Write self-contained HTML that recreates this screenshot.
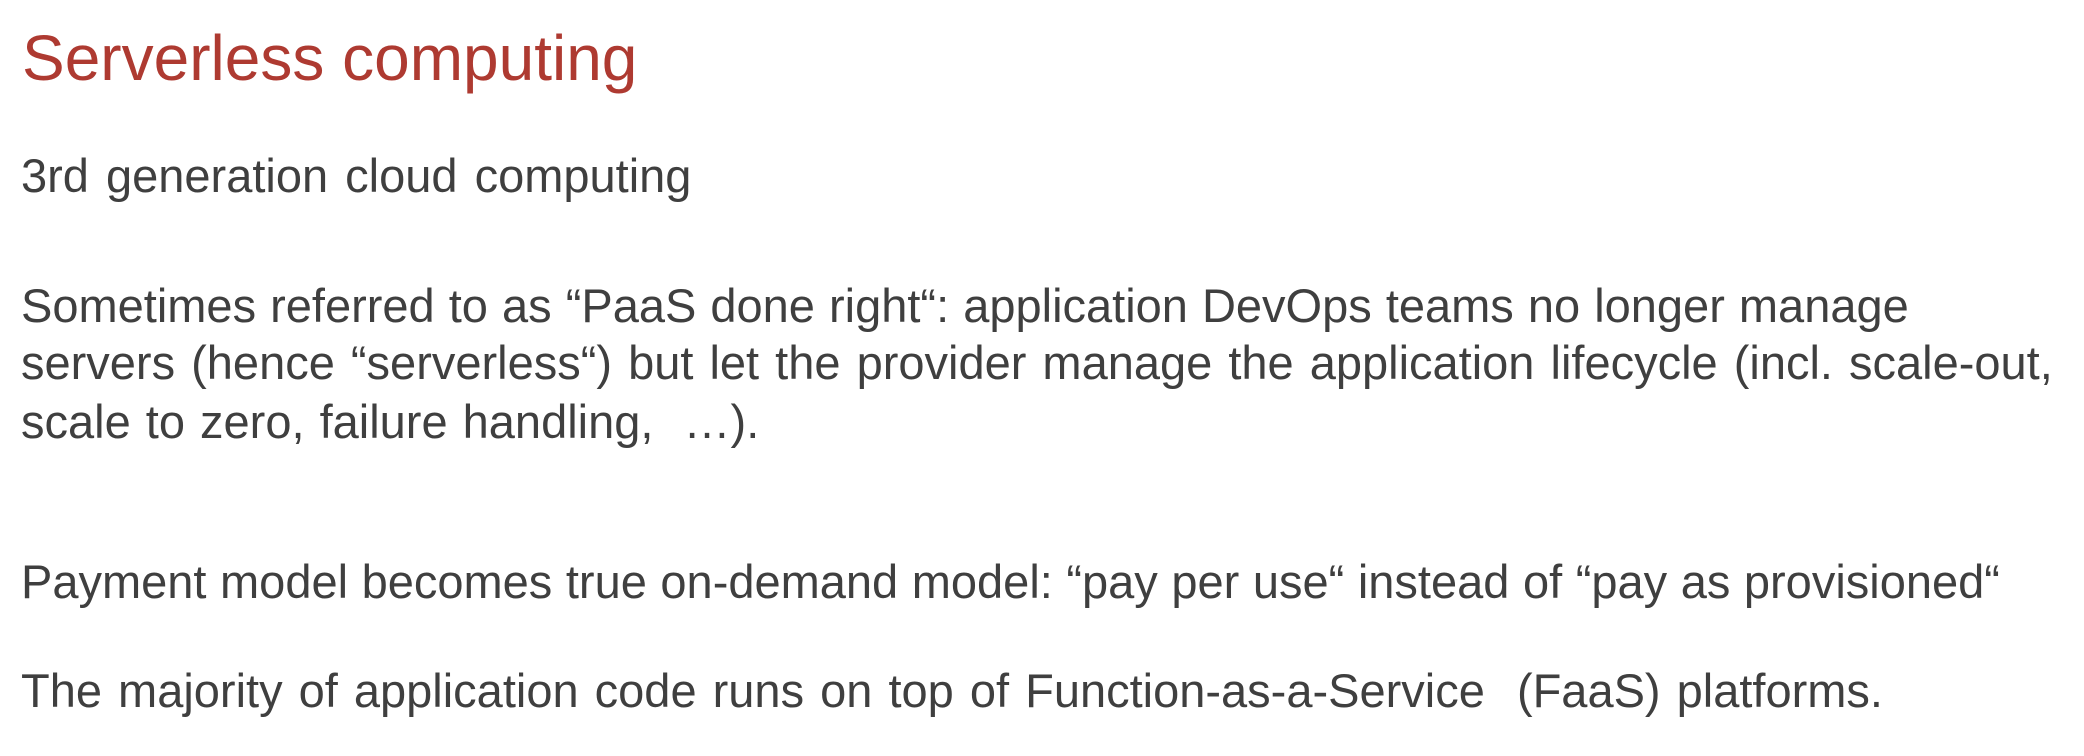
<!DOCTYPE html>
<html><head><meta charset="utf-8"><style>
html,body{margin:0;padding:0;background:#fff;width:2084px;height:756px;overflow:hidden}
div{position:absolute;white-space:pre;font-family:"Liberation Sans",Arial,sans-serif;line-height:1}
.t{font-size:64px;color:#AE3A31;left:22px;top:26px}
.b{font-size:47px;color:#3f3f3f;left:21px}
</style></head><body>
<div class="t">Serverless computing</div>
<div class="b" style="top:152px;word-spacing:4px">3rd generation cloud computing</div>
<div class="b" style="top:282px;word-spacing:1px">Sometimes referred to as “PaaS done right“: application DevOps teams no longer manage</div>
<div class="b" style="top:339px;word-spacing:3px">servers (hence “serverless“) but let the provider manage the application lifecycle (incl. scale-out,</div>
<div class="b" style="top:398px;word-spacing:2px">scale to zero, failure handling,  …).</div>
<div class="b" style="top:558px;word-spacing:0.5px">Payment model becomes true on-demand model: “pay per use“ instead of “pay as provisioned“</div>
<div class="b" style="top:667px;word-spacing:3px">The majority of application code runs on top of Function-as-a-Service  (FaaS) platforms.</div>
</body></html>
